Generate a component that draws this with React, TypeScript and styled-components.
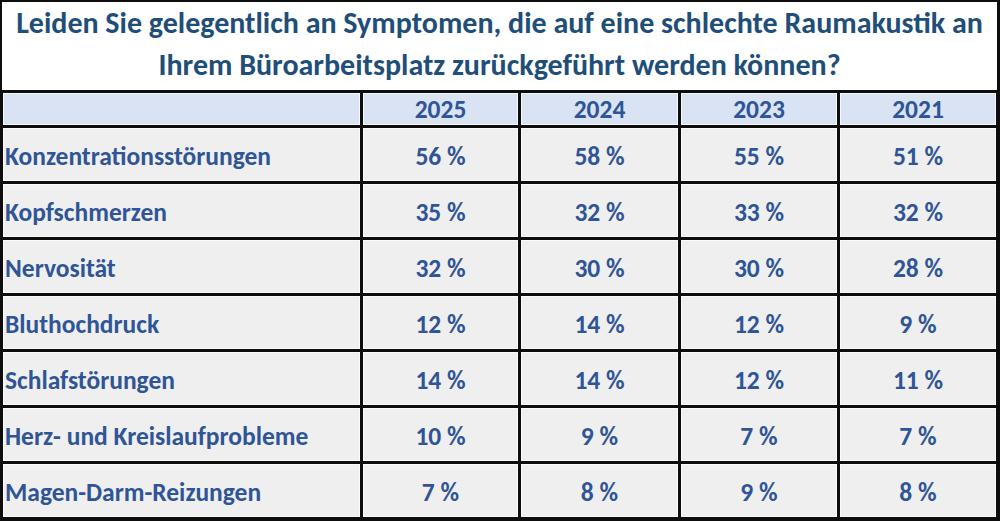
import React from "react";
import styled, { createGlobalStyle } from "styled-components";

const Global = createGlobalStyle`
  html, body { margin: 0; padding: 0; background: #ffffff; }
  * { box-sizing: border-box; }
`;

const FONT = `Carlito, Calibri, "Open Sans", "Noto Sans", sans-serif`;

const Frame = styled.div`
  width: 1000px;
  height: 521px;
  background: #0d0d0d;
  display: flex;
  flex-direction: column;
  font-family: ${FONT};
  font-weight: 700;
`;

const Title = styled.div`
  margin: 2px 3px 0 2px;
  height: 88px;
  padding-bottom: 4px;
  background: #ffffff;
  display: flex;
  flex-direction: column;
  align-items: center;
  justify-content: center;
  color: #1f4e79;
  font-size: 30px;
  line-height: 42px;
  text-align: center;
  white-space: nowrap;
`;

const Grid = styled.div`
  display: grid;
  grid-template-columns: 357px 155px 157px 156px 156px;
  grid-template-rows: 32px repeat(7, 53px);
  gap: 3px;
  padding: 3px 4px 4px 3px;
`;

const Cell = styled.div<{ $head?: boolean; $label?: boolean }>`
  background: ${(p) => (p.$head ? "#dae3f3" : "#efefef")};
  box-shadow: inset 0 0 0 1px rgba(255, 255, 255, 0.75);
  color: #2f5597;
  font-size: 25.5px;
  display: flex;
  align-items: center;
  justify-content: ${(p) => (p.$label ? "flex-start" : "center")};
  padding-left: ${(p) => (p.$label ? "2px" : "0")};
  padding-top: ${(p) => (p.$head ? "1px" : "3px")};
  white-space: nowrap;
`;

const years = ["2025", "2024", "2023", "2021"];

const rows: [string, string[]][] = [
  ["Konzentrationsstörungen", ["56 %", "58 %", "55 %", "51 %"]],
  ["Kopfschmerzen", ["35 %", "32 %", "33 %", "32 %"]],
  ["Nervosität", ["32 %", "30 %", "30 %", "28 %"]],
  ["Bluthochdruck", ["12 %", "14 %", "12 %", "9 %"]],
  ["Schlafstörungen", ["14 %", "14 %", "12 %", "11 %"]],
  ["Herz- und Kreislaufprobleme", ["10 %", "9 %", "7 %", "7 %"]],
  ["Magen-Darm-Reizungen", ["7 %", "8 %", "9 %", "8 %"]],
];

export default function App() {
  return (
    <>
      <Global />
      <Frame>
        <Title>
          <div>Leiden Sie gelegentlich an Symptomen, die auf eine schlechte Raumakustik an</div>
          <div>Ihrem Büroarbeitsplatz zurückgeführt werden können?</div>
        </Title>
        <Grid>
          <Cell $head />
          {years.map((y) => (
            <Cell $head key={y}>
              {y}
            </Cell>
          ))}
          {rows.map(([label, vals]) => (
            <React.Fragment key={label}>
              <Cell $label>{label}</Cell>
              {vals.map((v, i) => (
                <Cell key={i}>{v}</Cell>
              ))}
            </React.Fragment>
          ))}
        </Grid>
      </Frame>
    </>
  );
}
